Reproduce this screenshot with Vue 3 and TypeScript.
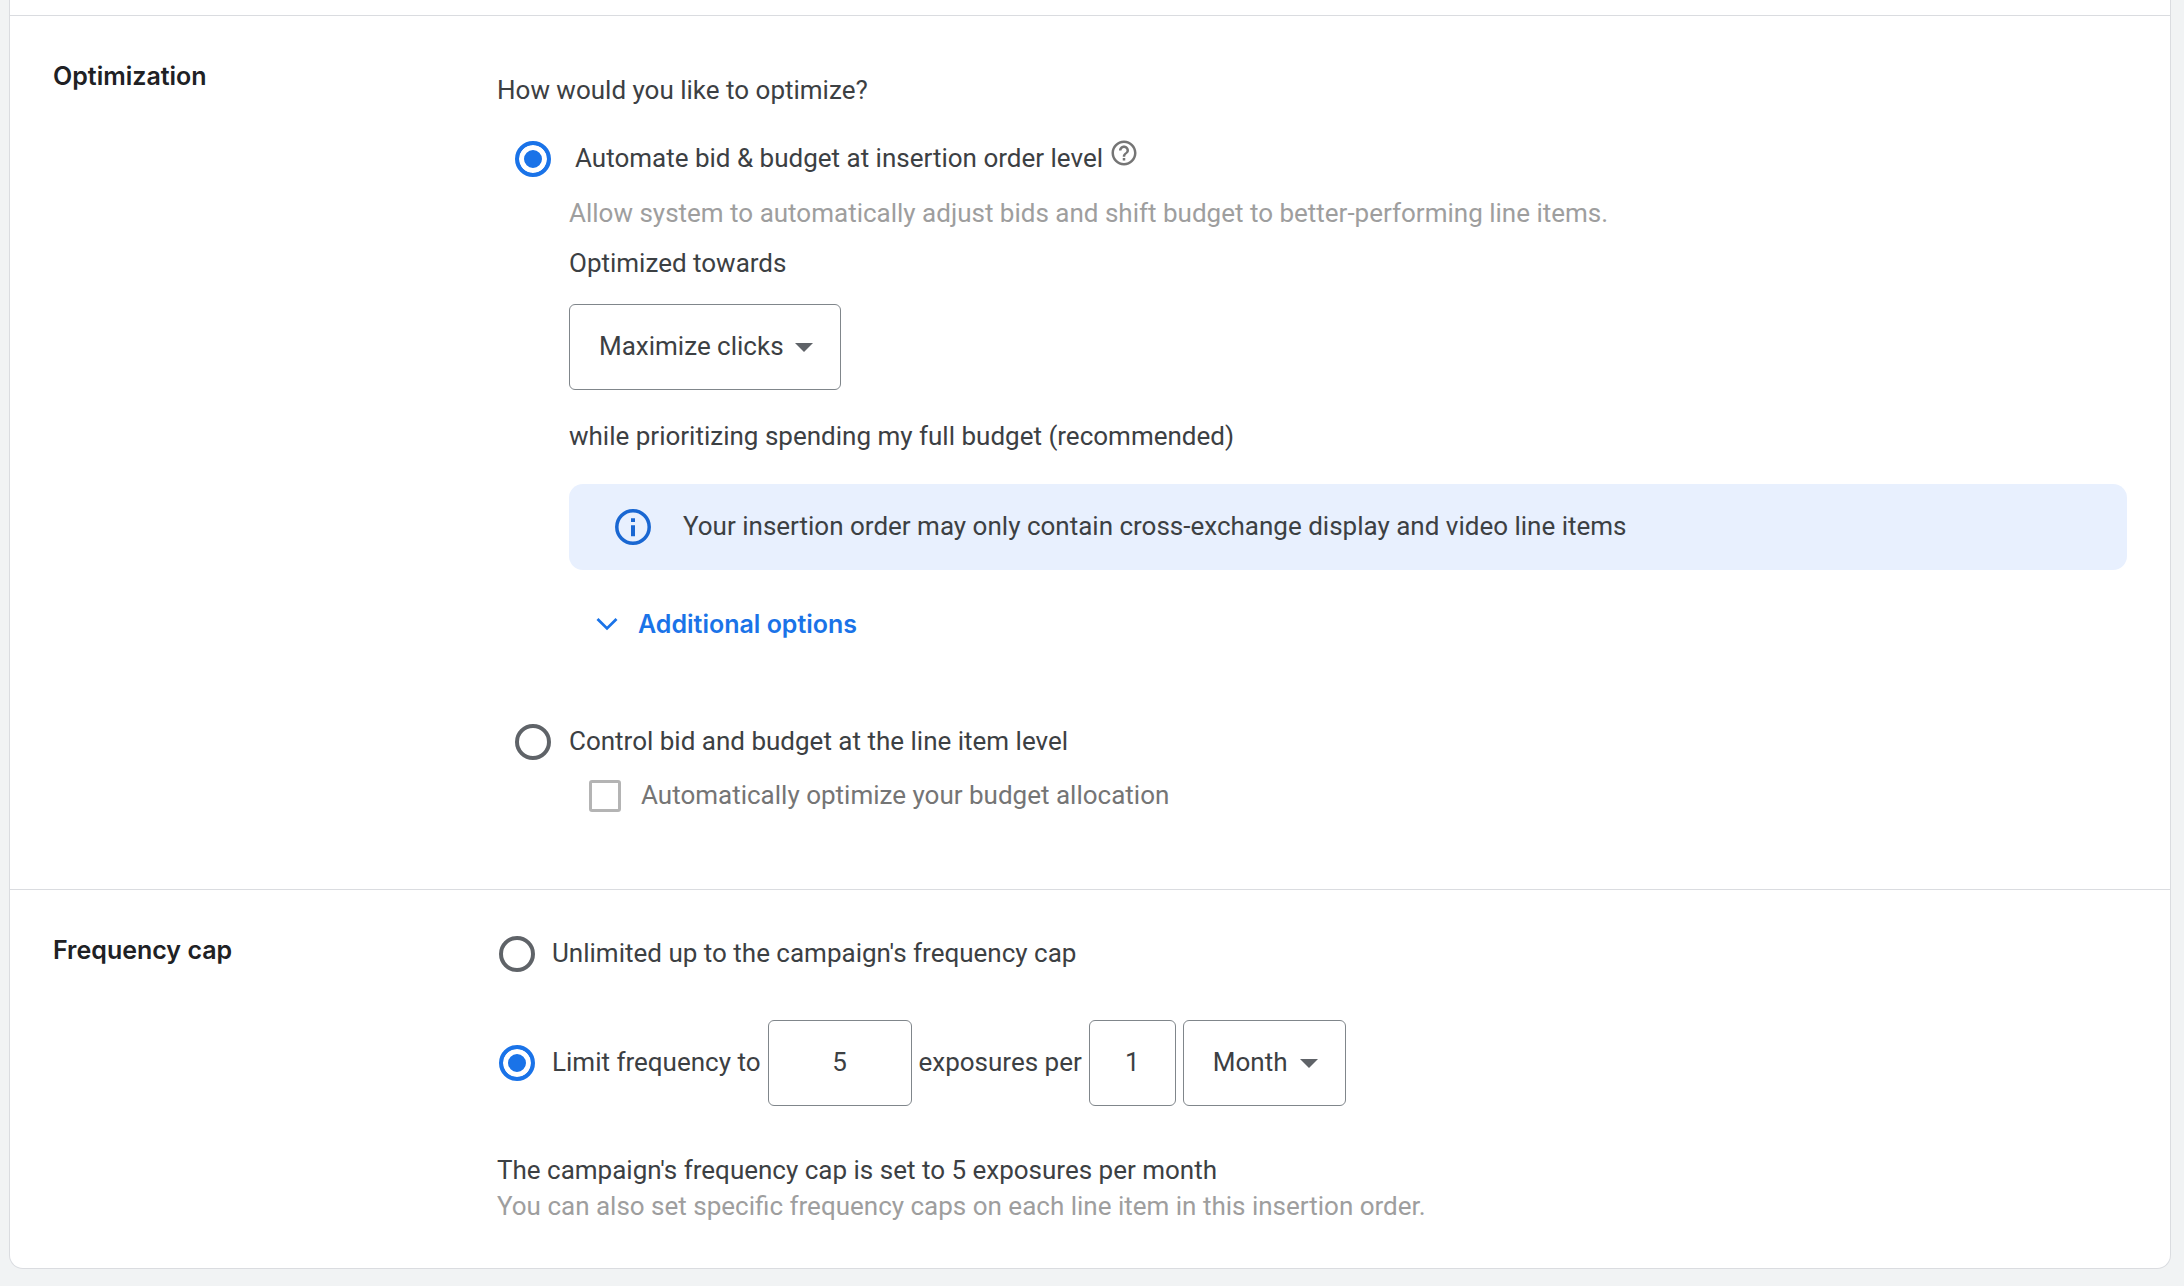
<script setup lang="ts">
import { ref } from 'vue'

type BidMode = 'automate' | 'line-item'
type CapMode = 'unlimited' | 'limit'

const bidMode = ref<BidMode>('automate')
const goal = ref('Maximize clicks')
const goals: string[] = ['Maximize clicks', 'Maximize conversions', 'Maximize viewable impressions']
const showOptions = ref(false)
const autoAllocate = ref(false)

const capMode = ref<CapMode>('limit')
const exposures = ref('5')
const periodCount = ref('1')
const period = ref('Month')
const periods: string[] = ['Day', 'Week', 'Month']
</script>

<template>
  <main class="card">
    <section class="section" aria-labelledby="optimization-title">
      <h2 id="optimization-title" class="title">Optimization</h2>
      <div class="body optimization">
        <p id="optimize-question" class="question">How would you like to optimize?</p>
        <div class="choices" role="radiogroup" aria-labelledby="optimize-question">
          <div class="choice">
            <input id="automate" v-model="bidMode" class="radio" type="radio" name="bid-mode" value="automate" />
            <label for="automate" class="automate-label">Automate bid &amp; budget at insertion order level</label>
            <button type="button" class="help" aria-label="Help">
              <svg viewBox="0 0 24 24" width="30" height="30" aria-hidden="true">
                <path
                  fill="currentColor"
                  d="M11 18h2v-2h-2v2zm1-16C6.48 2 2 6.48 2 12s4.480 10 10 10 10-4.480 10-10S17.520 2 12 2zm0 18c-4.410 0-8-3.590-8-8s3.590-8 8-8 8 3.590 8 8-3.590 8-8 8zm0-14c-2.210 0-4 1.790-4 4h2c0-1.100.9-2 2-2s2 .9 2 2c0 2-3 1.750-3 5h2c0-2.250 3-2.500 3-5 0-2.210-1.790-4-4-4z"
                />
              </svg>
            </button>
          </div>

          <div class="details">
            <p class="hint">Allow system to automatically adjust bids and shift budget to better-performing line items.</p>
            <label for="goal" class="goal-label">Optimized towards</label>
            <div class="select goal">
              <select id="goal" v-model="goal">
                <option v-for="item in goals" :key="item">{{ item }}</option>
              </select>
              <svg class="arrow" viewBox="0 0 18 9" width="18" height="9" aria-hidden="true">
                <path d="M0 0h18L9 9z" fill="currentColor" />
              </svg>
            </div>
            <p class="priority">while prioritizing spending my full budget (recommended)</p>
            <div class="banner" role="note">
              <svg viewBox="0 0 36 36" width="36" height="36" aria-hidden="true">
                <circle cx="18" cy="18" r="16.200" fill="none" stroke="currentColor" stroke-width="3.500" />
                <path d="M16 9.200h4v3.800h-4zM16 16.200h4v11h-4z" fill="currentColor" />
              </svg>
              <p>Your insertion order may only contain cross-exchange display and video line items</p>
            </div>
            <button type="button" class="more" :aria-expanded="showOptions" @click="showOptions = !showOptions">
              <svg viewBox="0 0 22 14" width="22" height="14" aria-hidden="true">
                <path d="M1.500 2 11 11.400 20.500 2" fill="none" stroke="currentColor" stroke-width="2.800" />
              </svg>
              Additional options
            </button>
          </div>

          <div class="choice manual">
            <input id="line-item" v-model="bidMode" class="radio" type="radio" name="bid-mode" value="line-item" />
            <label for="line-item">Control bid and budget at the line item level</label>
          </div>
          <div class="allocation">
            <input id="allocate" v-model="autoAllocate" class="checkbox" type="checkbox" disabled />
            <label for="allocate">Automatically optimize your budget allocation</label>
          </div>
        </div>
      </div>
    </section>

    <section class="section" aria-labelledby="frequency-title">
      <h2 id="frequency-title" class="title">Frequency cap</h2>
      <div class="body frequency">
        <div class="choice">
          <input id="unlimited" v-model="capMode" class="radio" type="radio" name="cap-mode" value="unlimited" />
          <label for="unlimited">Unlimited up to the campaign's frequency cap</label>
        </div>
        <div class="choice limit">
          <input id="limit" v-model="capMode" class="radio" type="radio" name="cap-mode" value="limit" />
          <div class="sentence">
            <label for="limit">Limit frequency to</label>
            <input v-model="exposures" class="box exposures" type="text" inputmode="numeric" aria-label="Exposures" />
            <label for="period-count">exposures per</label>
            <input id="period-count" v-model="periodCount" class="box count" type="text" inputmode="numeric" />
            <div class="select period">
              <select v-model="period" aria-label="Period">
                <option v-for="item in periods" :key="item">{{ item }}</option>
              </select>
              <svg class="arrow" viewBox="0 0 18 9" width="18" height="9" aria-hidden="true">
                <path d="M0 0h18L9 9z" fill="currentColor" />
              </svg>
            </div>
          </div>
        </div>
        <p>The campaign's frequency cap is set to 5 exposures per month</p>
        <p class="hint">You can also set specific frequency caps on each line item in this insertion order.</p>
      </div>
    </section>
  </main>
</template>

<style>
body {
  background: #f1f3f4;
}
</style>

<style scoped>
.card {
  margin: 0 13px 17px 9px;
  padding-top: 15px;
  border: 1px solid #dadce0;
  border-top: 0;
  border-radius: 0 0 14px 14px;
  background: #fff;
  color: #3c4043;
  font: 400 26px/36px Roboto, "Liberation Sans", sans-serif;
}
p,
h2 {
  margin: 0;
}
.section {
  display: grid;
  grid-template-columns: 444px minmax(0, 1fr);
  padding: 42px 43px 44px;
  border-top: 1px solid #dadce0;
}
.title {
  color: #202124;
  font: 600 25px/36px Inter, Roboto, sans-serif;
}
.optimization {
  padding: 14px 0 31px;
}
.frequency {
  padding-top: 4px;
}
.question {
  margin-bottom: 33px;
}
.choices {
  padding-left: 18px;
}
.choice {
  display: flex;
  align-items: center;
  gap: 18px;
}
.choice label,
.allocation label,
.banner p {
  padding-bottom: 2px;
  line-height: 34px;
}
.radio {
  appearance: none;
  flex: none;
  box-sizing: border-box;
  width: 36px;
  height: 36px;
  margin: 0;
  border: 4px solid #5f6368;
  border-radius: 50%;
  background: #fff;
}
.radio:checked {
  border-color: #1a73e8;
  background: #1a73e8;
  box-shadow: inset 0 0 0 5px #fff;
}
.automate-label {
  padding-left: 6px;
}
.help {
  display: flex;
  align-self: flex-start;
  margin: -3px 0 -3px -12px;
  padding: 0;
  border: 0;
  background: none;
  color: #757575;
}
.details {
  display: flex;
  flex-direction: column;
  align-items: flex-start;
  padding: 18px 0 0 54px;
}
.hint {
  color: #9e9e9e;
}
.goal-label {
  margin: 14px 0 23px;
}
.select {
  position: relative;
}
.select select,
.box {
  box-sizing: border-box;
  height: 86px;
  margin: 0;
  border: 1px solid #80868b;
  border-radius: 6px;
  background: #fff;
  color: inherit;
  font: inherit;
}
.select select {
  display: block;
  appearance: none;
  width: 100%;
  padding: 0 44px 2px 29px;
}
.arrow {
  position: absolute;
  top: 39px;
  right: 28px;
  color: #5f6368;
  pointer-events: none;
}
.goal {
  width: 272px;
}
.priority {
  margin: 28px 0 30px;
}
.banner {
  display: flex;
  align-items: center;
  align-self: stretch;
  gap: 32px;
  box-sizing: border-box;
  min-height: 86px;
  padding: 0 46px;
  border-radius: 14px;
  background: #e8f0fe;
}
.banner svg {
  flex: none;
  color: #1967d2;
}
.more {
  display: flex;
  align-items: center;
  gap: 20px;
  margin: 36px 0 0;
  padding: 0 27px;
  border: 0;
  background: none;
  color: #1a73e8;
  font: 600 25px/36px Inter, Roboto, sans-serif;
}
.manual {
  margin-top: 82px;
}
.allocation {
  display: flex;
  align-items: center;
  gap: 20px;
  margin-top: 18px;
  padding-left: 74px;
  color: #757575;
}
.checkbox {
  appearance: none;
  flex: none;
  box-sizing: border-box;
  width: 32px;
  height: 32px;
  margin: 0;
  border: 3px solid #b4b4b4;
  border-radius: 3px;
}
.frequency .choice {
  gap: 17px;
  padding-left: 2px;
}
.limit {
  margin: 48px 0 46px;
}
.sentence {
  display: flex;
  align-items: center;
  gap: 7px;
}
.box {
  padding: 0 0 2px;
  text-align: center;
}
.exposures {
  width: 144px;
}
.count {
  width: 87px;
}
.period {
  width: 163px;
}
</style>
